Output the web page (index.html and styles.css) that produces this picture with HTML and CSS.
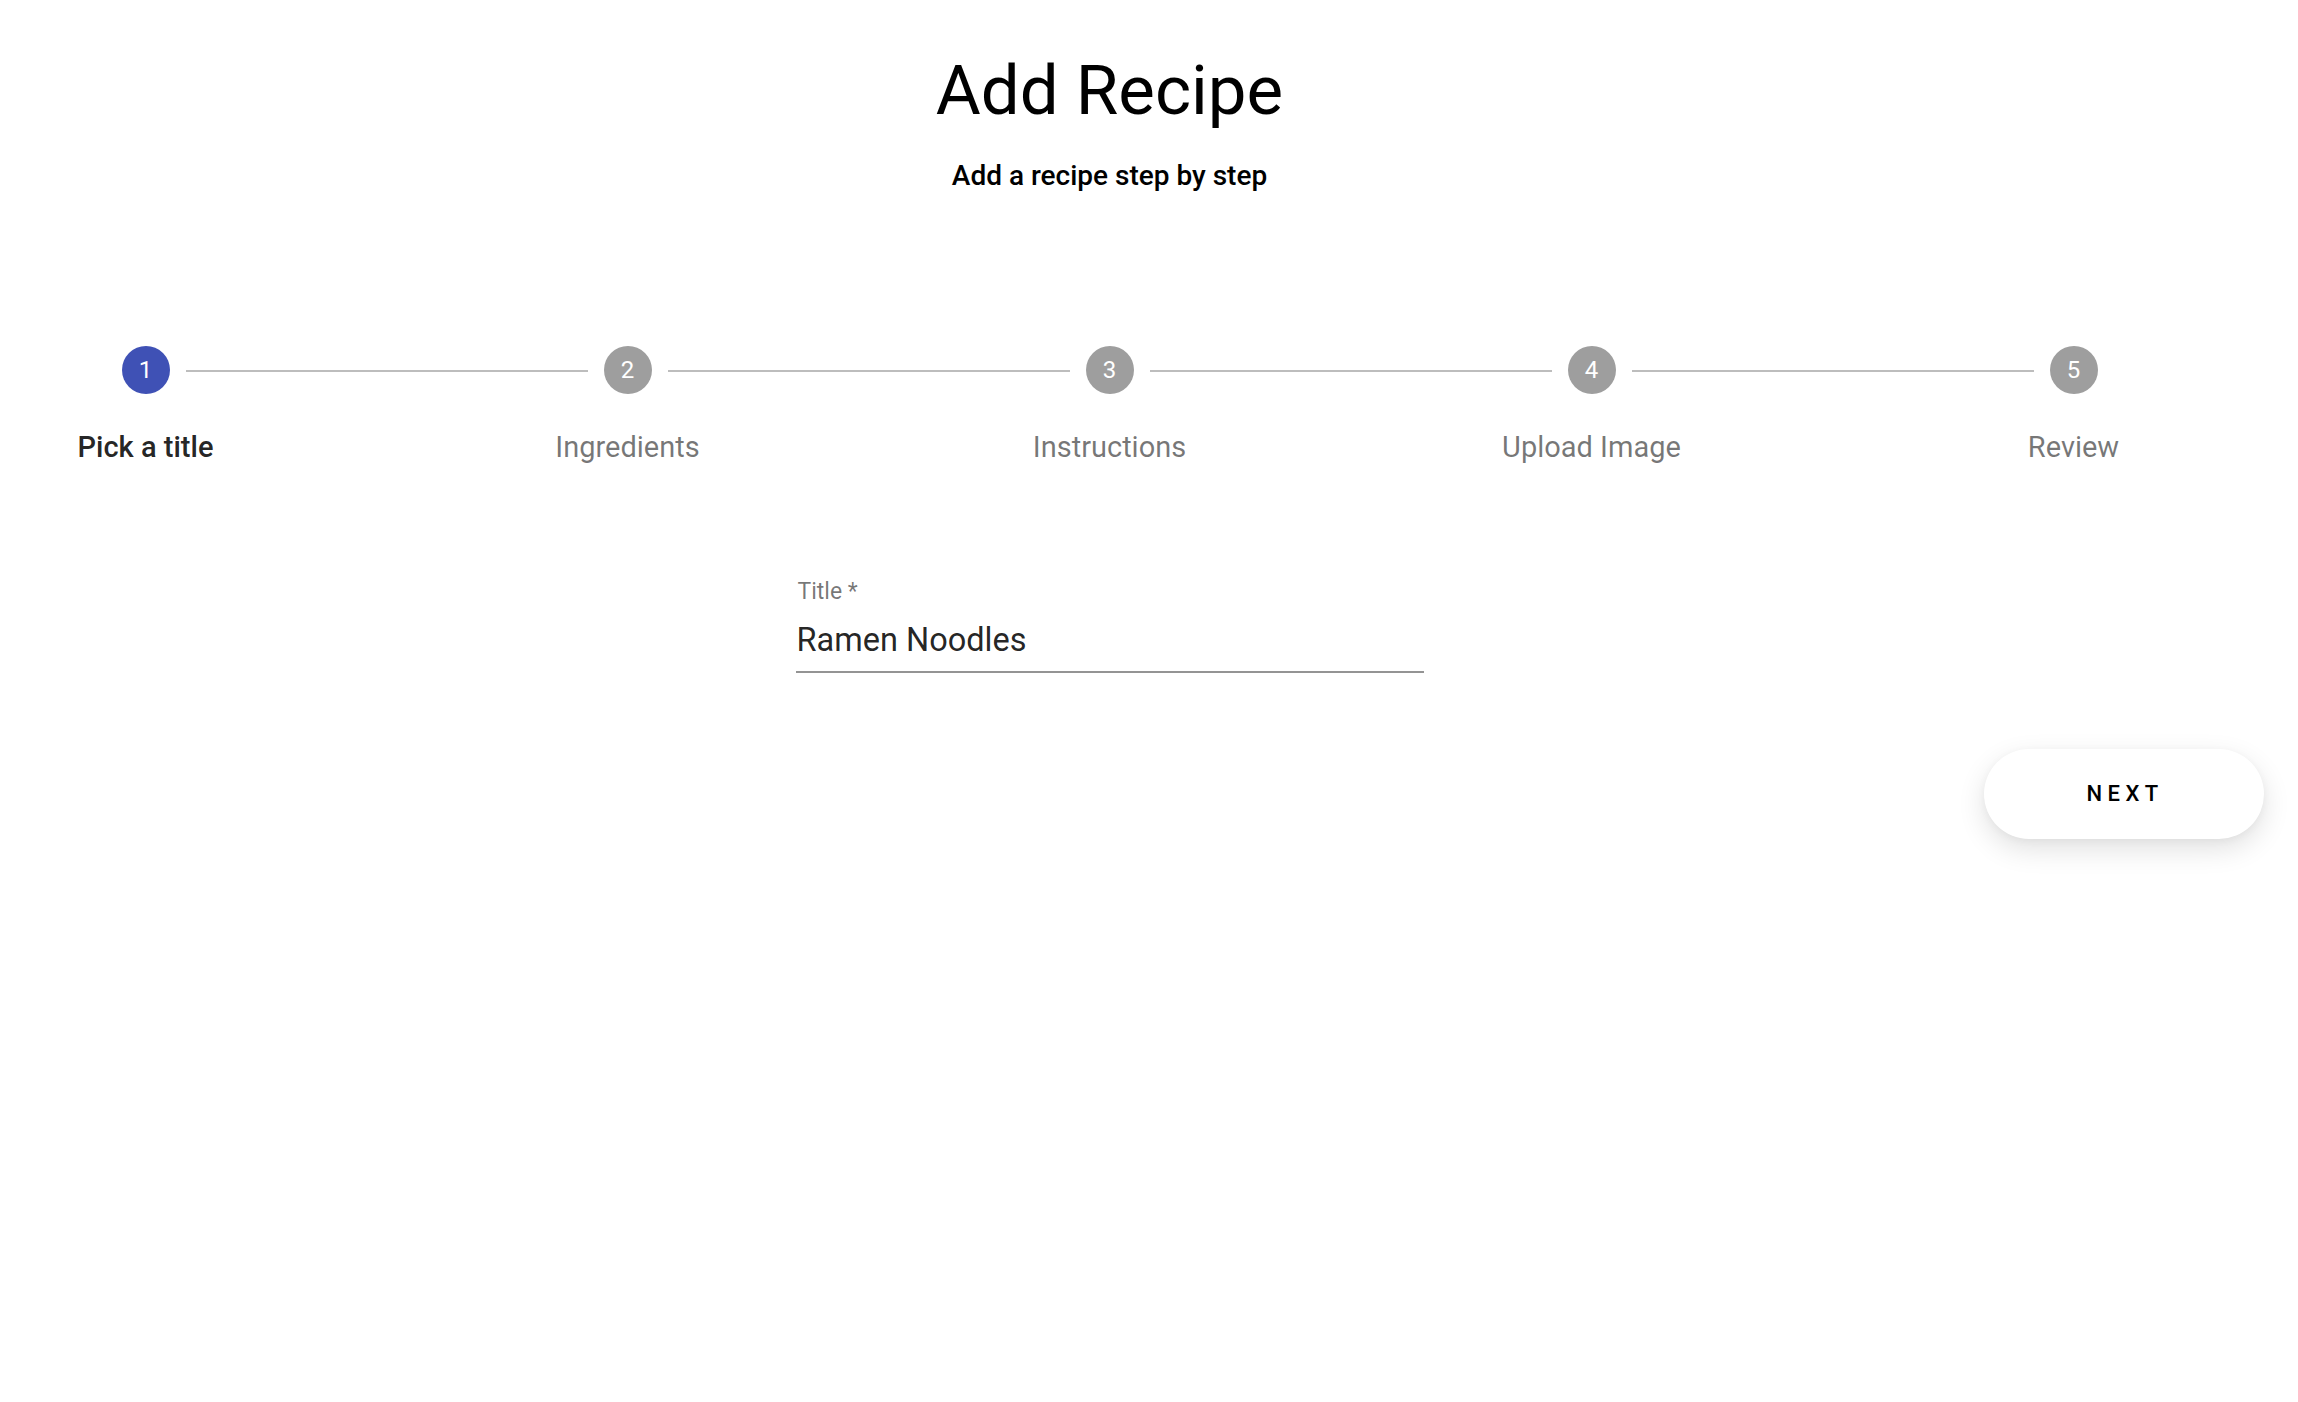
FILE: index.html
```html
<!DOCTYPE html>
<html lang="en">
<head>
<meta charset="utf-8">
<title>Add Recipe</title>
<link rel="stylesheet" href="styles.css">
</head>
<body>
<div class="page">
  <h1 class="title">Add Recipe</h1>
  <p class="subtitle">Add a recipe step by step</p>

  <div class="stepper">
    <div class="step step-first">
      <div class="step-row">
        <span class="line line-hidden"></span>
        <span class="circle circle-active">1</span>
        <span class="line"></span>
      </div>
      <div class="step-label step-label-active">Pick a title</div>
    </div>
    <div class="step">
      <div class="step-row">
        <span class="line"></span>
        <span class="circle">2</span>
        <span class="line"></span>
      </div>
      <div class="step-label">Ingredients</div>
    </div>
    <div class="step">
      <div class="step-row">
        <span class="line"></span>
        <span class="circle">3</span>
        <span class="line"></span>
      </div>
      <div class="step-label">Instructions</div>
    </div>
    <div class="step">
      <div class="step-row">
        <span class="line"></span>
        <span class="circle">4</span>
        <span class="line"></span>
      </div>
      <div class="step-label">Upload Image</div>
    </div>
    <div class="step">
      <div class="step-row">
        <span class="line"></span>
        <span class="circle">5</span>
        <span class="line line-hidden"></span>
      </div>
      <div class="step-label">Review</div>
    </div>
  </div>

  <div class="field">
    <label class="field-label" for="title">Title *</label>
    <div class="field-input" id="title">Ramen Noodles</div>
  </div>

  <div class="actions">
    <button class="next-btn" type="button">NEXT</button>
  </div>
</div>
</body>
</html>
```

FILE: styles.css
```css
html {
  overflow: hidden;
}

html, body {
  margin: 0;
  padding: 0;
  background: #ffffff;
}

body {
  font-family: Roboto, "Liberation Sans", Arial, sans-serif;
  color: rgba(0, 0, 0, 0.87);
}

.page {
  width: 2219px;
  padding-top: 49px;
  padding-bottom: 200px;
  display: flex;
  flex-direction: column;
}

.title {
  margin: 0;
  font-size: 69px;
  line-height: 84px;
  font-weight: 400;
  color: #000000;
  text-align: center;
}

.subtitle {
  margin: 25px 0 0;
  font-size: 28px;
  line-height: 36px;
  font-weight: 500;
  color: #000000;
  text-align: center;
}

.stepper {
  display: flex;
  margin: 152px -95.5px 0;
}

.step {
  flex: 1 1 0;
  display: flex;
  flex-direction: column;
  align-items: stretch;
}

.step-row {
  display: flex;
  align-items: center;
  height: 48px;
}

.line {
  flex: 1 1 0;
  height: 2px;
  margin-top: 2px;
  background: #bdbdbd;
}

.line-hidden {
  background: transparent;
}

.circle {
  flex: 0 0 48px;
  width: 48px;
  height: 48px;
  margin: 0 16px;
  border-radius: 50%;
  background: #9e9e9e;
  color: #ffffff;
  font-size: 24px;
  line-height: 48px;
  text-align: center;
}

.circle-active {
  background: #3f51b5;
}

.step-label {
  margin-top: 33px;
  font-size: 29px;
  line-height: 40px;
  text-align: center;
  color: rgba(0, 0, 0, 0.54);
  font-weight: 400;
}

.step-label-active {
  color: rgba(0, 0, 0, 0.87);
  font-weight: 500;
}

.field {
  width: 628px;
  margin: 111px auto 0;
  display: flex;
  flex-direction: column;
}

.field-label {
  font-size: 23px;
  line-height: 28px;
  color: rgba(0, 0, 0, 0.54);
  padding-left: 2px;
}

.field-input {
  margin-top: 14px;
  font-size: 32.5px;
  line-height: 40px;
  color: rgba(0, 0, 0, 0.87);
  padding: 0 0 11px 1px;
  border-bottom: 2px solid #949494;
}

.actions {
  display: flex;
  justify-content: flex-end;
  margin: 76px -45px 0 0;
}

.next-btn {
  width: 280px;
  height: 90px;
  border: none;
  border-radius: 45px;
  background: #ffffff;
  box-shadow: 0 10px 28px rgba(0, 0, 0, 0.12), 0 2px 8px rgba(0, 0, 0, 0.04);
  font-family: Roboto, "Liberation Sans", Arial, sans-serif;
  font-size: 22px;
  font-weight: 500;
  letter-spacing: 0.25em;
  padding: 0 0 2px 0.1em;
  color: #000000;
}
```
